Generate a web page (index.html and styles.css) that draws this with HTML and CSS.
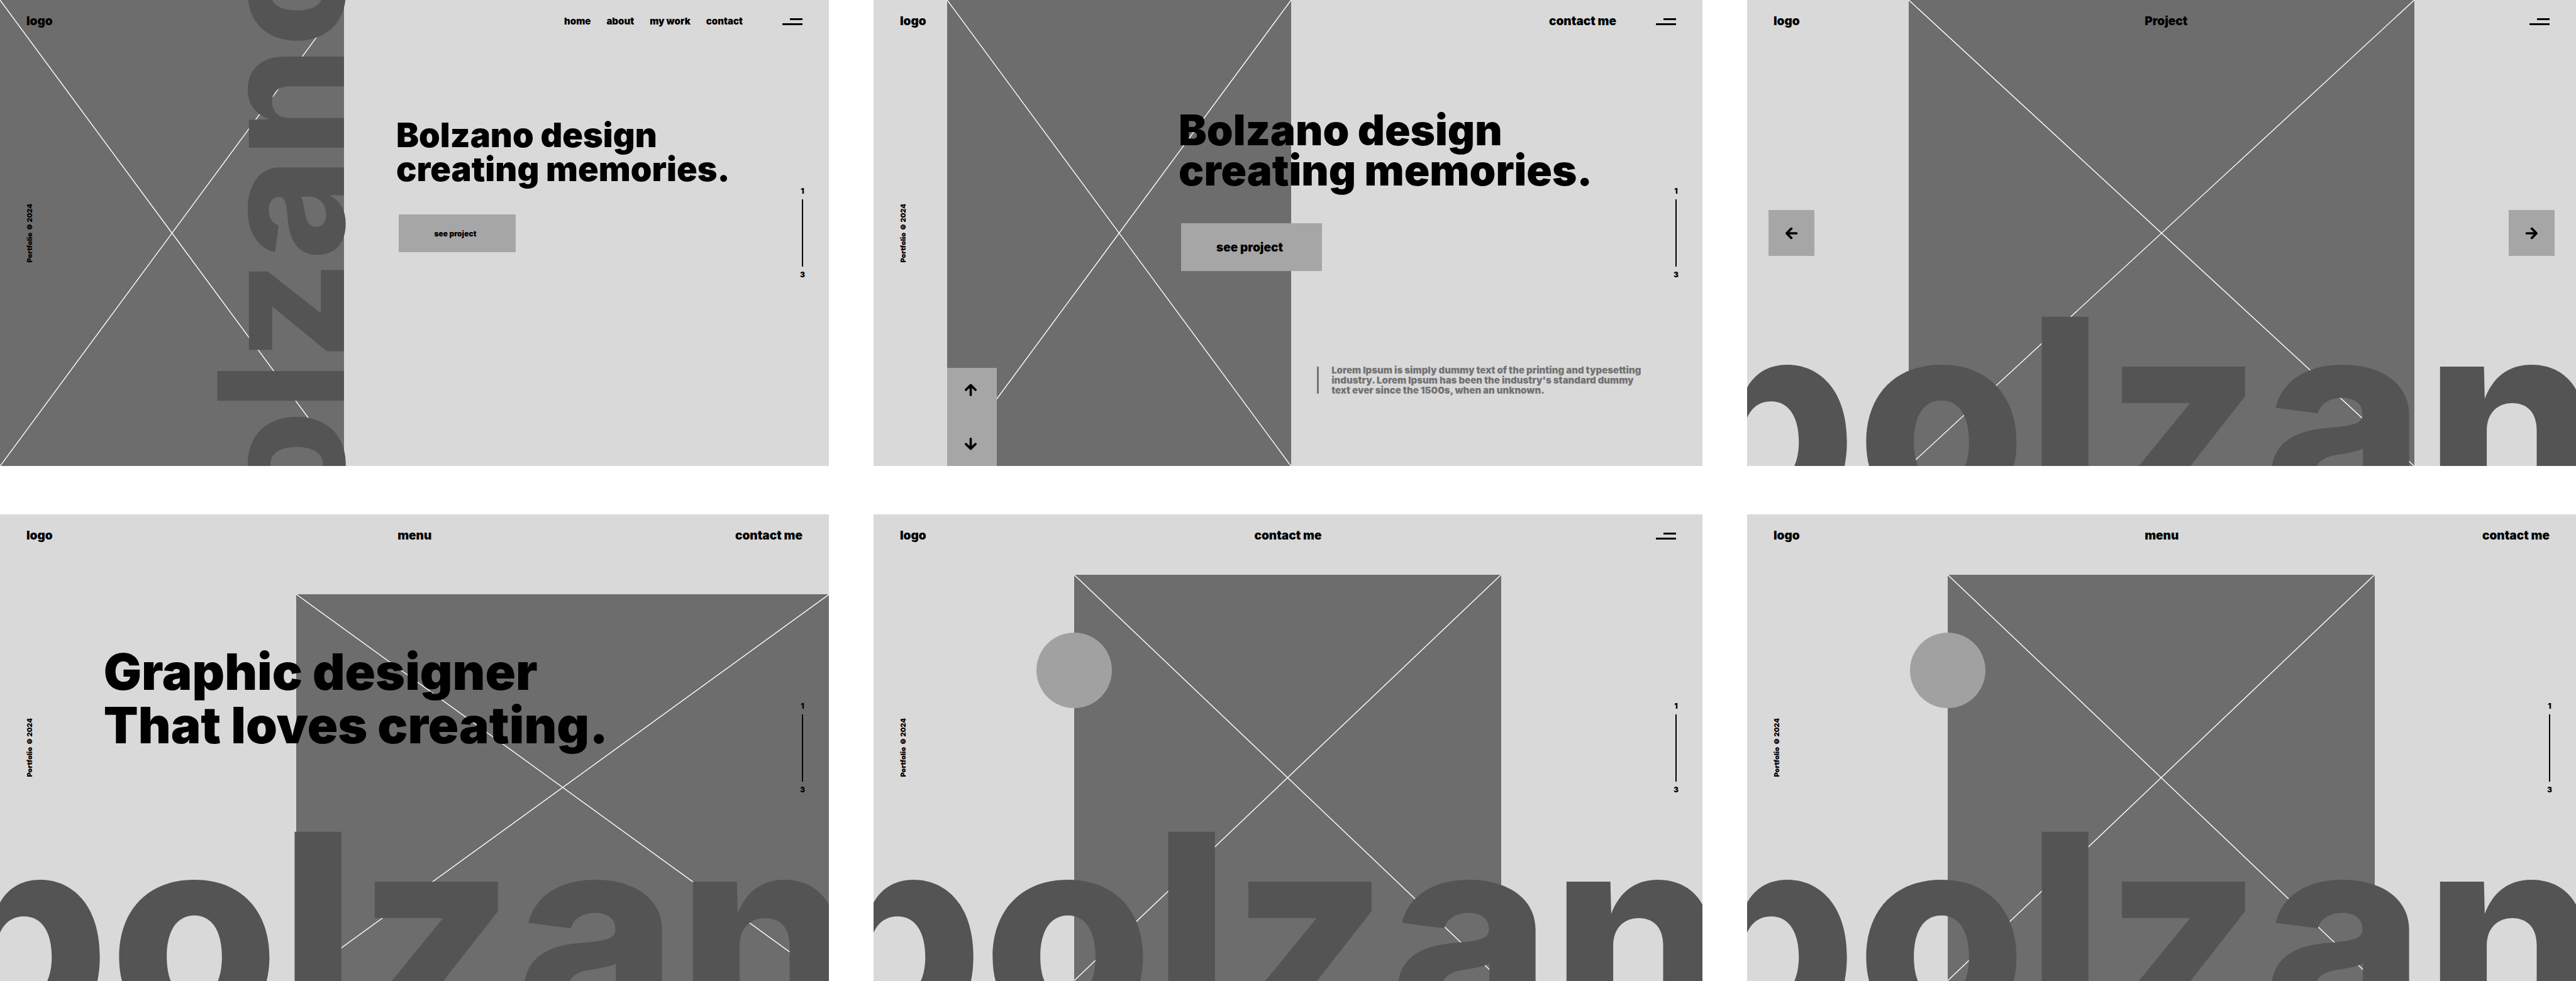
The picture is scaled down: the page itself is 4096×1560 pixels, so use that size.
FILE: index.html
```html
<!DOCTYPE html>
<html lang="en">
<head>
<meta charset="utf-8">
<title>Bolzano design portfolio</title>
<link rel="stylesheet" href="styles.css">
</head>
<body>
<svg class="defs" aria-hidden="true">
  <symbol id="cross" viewBox="0 0 100 100" preserveAspectRatio="none">
    <path d="M0 0L100 100M100 0L0 100" fill="none" stroke="#fff" stroke-width="1.4" vector-effect="non-scaling-stroke"/>
  </symbol>
  <symbol id="bars" viewBox="0 0 32 11">
    <path d="M12 0H32V3H12ZM0 8H32V11H0Z"/>
  </symbol>
  <symbol id="arrow" viewBox="0 0 28 29">
    <path d="M14 26.500V3.500M2.800 14.300L14 3.300L25.200 14.300" fill="none" stroke="#000" stroke-width="5.400" stroke-linecap="round" stroke-linejoin="round"/>
  </symbol>
</svg>

<main class="board">

  <section class="screen">
    <div class="photo photo-left">
      <svg class="cross"><use href="#cross"/></svg>
      <div class="word-side">bolzano</div>
    </div>
    <header class="bar bar-links">
      <a class="link" href="#">logo</a>
      <nav class="links">
        <a class="link-small" href="#">home</a>
        <a class="link-small" href="#">about</a>
        <a class="link-small" href="#">my work</a>
        <a class="link-small" href="#">contact</a>
      </nav>
      <button class="burger" aria-label="Open menu"><svg class="bars"><use href="#bars"/></svg></button>
    </header>
    <div class="hero hero-small">
      <h2 class="title-small">Bolzano design<br>creating memories.</h2>
      <button class="cta cta-small">see project</button>
    </div>
    <aside class="rails">
      <span class="credit">Portfolio ©2024</span>
      <div class="pager"><span>1</span><i class="pager-line"></i><span>3</span></div>
    </aside>
  </section>

  <section class="screen">
    <div class="photo photo-inset">
      <svg class="cross"><use href="#cross"/></svg>
    </div>
    <header class="bar bar-links">
      <a class="link" href="#">logo</a>
      <nav class="links"><a class="link" href="#">contact me</a></nav>
      <button class="burger" aria-label="Open menu"><svg class="bars"><use href="#bars"/></svg></button>
    </header>
    <aside class="rails">
      <span class="credit">Portfolio ©2024</span>
      <div class="pager"><span>1</span><i class="pager-line"></i><span>3</span></div>
    </aside>
    <div class="hero hero-medium">
      <h2 class="title-medium">Bolzano design<br>creating memories.</h2>
      <button class="cta cta-large">see project</button>
    </div>
    <p class="note">Lorem Ipsum is simply dummy text of the printing and typesetting industry. Lorem Ipsum has been the industry's standard dummy text ever since the 1500s, when an unknown.</p>
    <div class="stepper">
      <button class="step" aria-label="Previous"><svg class="arrow"><use href="#arrow"/></svg></button>
      <button class="step" aria-label="Next"><svg class="arrow arrow-down"><use href="#arrow"/></svg></button>
    </div>
  </section>

  <section class="screen">
    <div class="photo photo-wide">
      <svg class="cross"><use href="#cross"/></svg>
    </div>
    <div class="word">bolzano</div>
    <header class="bar bar-thirds">
      <a class="link" href="#">logo</a>
      <h2 class="link">Project</h2>
      <button class="burger" aria-label="Open menu"><svg class="bars"><use href="#bars"/></svg></button>
    </header>
    <div class="slider">
      <button class="slide" aria-label="Previous project"><svg class="arrow arrow-left"><use href="#arrow"/></svg></button>
      <button class="slide" aria-label="Next project"><svg class="arrow arrow-right"><use href="#arrow"/></svg></button>
    </div>
  </section>

  <section class="screen">
    <div class="photo photo-right">
      <svg class="cross"><use href="#cross"/></svg>
    </div>
    <div class="word">bolzano</div>
    <header class="bar bar-thirds">
      <a class="link" href="#">logo</a>
      <a class="link" href="#">menu</a>
      <a class="link" href="#">contact me</a>
    </header>
    <div class="hero hero-large">
      <h1 class="title-large">Graphic designer<br>That loves creating.</h1>
    </div>
    <aside class="rails">
      <span class="credit">Portfolio ©2024</span>
      <div class="pager"><span>1</span><i class="pager-line"></i><span>3</span></div>
    </aside>
  </section>

  <section class="screen">
    <div class="photo photo-center">
      <svg class="cross"><use href="#cross"/></svg>
      <span class="dot"></span>
    </div>
    <div class="word">bolzano</div>
    <header class="bar bar-center">
      <a class="link" href="#">logo</a>
      <a class="link" href="#">contact me</a>
      <button class="burger" aria-label="Open menu"><svg class="bars"><use href="#bars"/></svg></button>
    </header>
    <aside class="rails">
      <span class="credit">Portfolio ©2024</span>
      <div class="pager"><span>1</span><i class="pager-line"></i><span>3</span></div>
    </aside>
  </section>

  <section class="screen">
    <div class="photo photo-center">
      <svg class="cross"><use href="#cross"/></svg>
      <span class="dot"></span>
    </div>
    <div class="word">bolzano</div>
    <header class="bar bar-thirds">
      <a class="link" href="#">logo</a>
      <a class="link" href="#">menu</a>
      <a class="link" href="#">contact me</a>
    </header>
    <aside class="rails">
      <span class="credit">Portfolio ©2024</span>
      <div class="pager"><span>1</span><i class="pager-line"></i><span>3</span></div>
    </aside>
  </section>

</main>
</body>
</html>
```
FILE: styles.css
```css
* {
  box-sizing: border-box;
}

body {
  margin: 0;
  background: #fff;
  color: #000;
  font-family: Inter, "Liberation Sans", sans-serif;
  font-weight: 900;
}

h1, h2, p {
  margin: 0;
  font-weight: inherit;
}

a {
  color: inherit;
  text-decoration: none;
}

button {
  border: 0;
  padding: 0;
  background: none;
  color: inherit;
  font: inherit;
}

.defs {
  display: none;
}

/* Board of six screens */
.board {
  display: grid;
  grid-template-columns: repeat(3, minmax(0, 1fr));
  gap: 77px 71px;
  align-items: start;
}

/* Every layer of a screen shares the one grid cell, later layers on top */
.screen {
  display: grid;
  grid-template: minmax(0, 1fr) / minmax(0, 1fr);
  aspect-ratio: 16 / 9;
  overflow: hidden;
  background: #d9d9d9;
}

.screen > * {
  position: relative;
  grid-area: 1 / 1;
}

/* Header bars */
.bar {
  align-self: start;
  padding: 22px 42px 0;
  line-height: 24px;
}

.bar-links {
  display: flex;
  align-items: center;
}

.bar-thirds {
  display: grid;
  grid-template-columns: 11fr 6fr 6fr;
  align-items: center;
}

.bar-center {
  display: grid;
  grid-template-columns: 1fr auto 1fr;
  align-items: center;
}

.bar-thirds > :last-child,
.bar-center > :last-child {
  justify-self: end;
}

.link {
  font-size: 19px;
}

.links {
  display: flex;
  gap: 25px;
  margin: 0 63px 0 auto;
}

.link-small {
  font-size: 15px;
}

.burger {
  display: flex;
}

.bars {
  width: 32px;
  height: 11px;
}

/* Picture placeholders */
.photo {
  display: grid;
  grid-template: minmax(0, 1fr) / minmax(0, 1fr);
  background: #6d6d6d;
}

.photo > * {
  grid-area: 1 / 1;
}

.cross {
  width: 100%;
  height: 100%;
}

.photo-left {
  width: 41.5%;
}

.photo-inset {
  width: 41.5%;
  margin-left: 8.9%;
}

.photo-wide {
  width: 61%;
  margin-left: 19.5%;
}

.photo-right {
  margin: 127px 0 0 35.7%;
}

.photo-center {
  width: 51.5%;
  margin: 96px 0 0 24.2%;
}

.dot {
  position: absolute;
  top: 92px;
  left: -60px;
  width: 120px;
  height: 120px;
  border-radius: 50%;
  background: #a1a1a1;
}

/* Oversized brand word */
.word,
.word-side {
  color: #545454;
  font-weight: 800;
  white-space: nowrap;
}

.word {
  align-self: end;
  margin: 0 0 -140px -104px;
  font-size: 436px;
  line-height: 436px;
}

.word-side {
  align-self: end;
  justify-self: end;
  margin: 0 -38px -260px 0;
  font-size: 277px;
  line-height: 277px;
  writing-mode: vertical-rl;
  transform: rotate(180deg);
}

/* Headlines */
.hero {
  align-self: start;
  justify-self: start;
  display: flex;
  flex-direction: column;
  align-items: flex-start;
  width: 100%;
}

.hero-small {
  gap: 45px;
  padding: 188px 0 0 47.8%;
}

.hero-medium {
  gap: 52px;
  padding: 175px 0 0 36.8%;
}

.hero-large {
  padding: 207px 0 0 12.5%;
}

.title-small {
  font-size: 54px;
  line-height: 54px;
}

.title-medium {
  font-size: 67px;
  line-height: 64px;
}

.title-large {
  font-size: 80px;
  line-height: 85px;
}

.cta {
  margin-left: 4px;
  padding-right: 6px;
  background: #a6a6a6;
}

.cta-small {
  width: 186px;
  height: 60px;
  font-size: 12px;
}

.cta-large {
  width: 224px;
  height: 76px;
  font-size: 19px;
}

.note {
  align-self: end;
  display: flex;
  gap: 20px;
  width: 528px;
  margin: 0 0 112px 53.5%;
  color: #737373;
  font-size: 15px;
  line-height: 16px;
}

.note::before {
  content: "";
  flex: none;
  width: 3px;
  margin: 2px 0 3px;
  background: #737373;
}

/* Arrow controls */
.stepper {
  align-self: end;
  display: flex;
  flex-direction: column;
  width: 79px;
  margin-left: 8.9%;
  padding-right: 4px;
  background: #a6a6a6;
}

.step {
  display: flex;
  justify-content: center;
  padding: 25px 0 33px;
}

.step + .step {
  padding: 33px 0 25px;
}

.arrow {
  width: 19px;
  height: 20px;
}

.arrow-down {
  transform: rotate(180deg);
}

.arrow-left {
  transform: rotate(-90deg);
}

.arrow-right {
  transform: rotate(90deg);
}

.slider {
  align-self: center;
  display: flex;
  justify-content: space-between;
  padding: 0 34px;
}

.slide {
  display: flex;
  align-items: center;
  justify-content: center;
  width: 73px;
  height: 73px;
  background: #a6a6a6;
}

/* Side rails */
.rails {
  align-self: center;
  display: flex;
  align-items: center;
  justify-content: space-between;
  padding: 0 38px 0 41px;
  font-size: 12px;
  line-height: 12px;
}

.credit {
  font-size: 11px;
  writing-mode: vertical-rl;
  transform: rotate(180deg);
}

.pager {
  display: flex;
  flex-direction: column;
  align-items: center;
  gap: 7px;
}

.pager-line {
  width: 2px;
  height: 107px;
  background: #000;
}
```
